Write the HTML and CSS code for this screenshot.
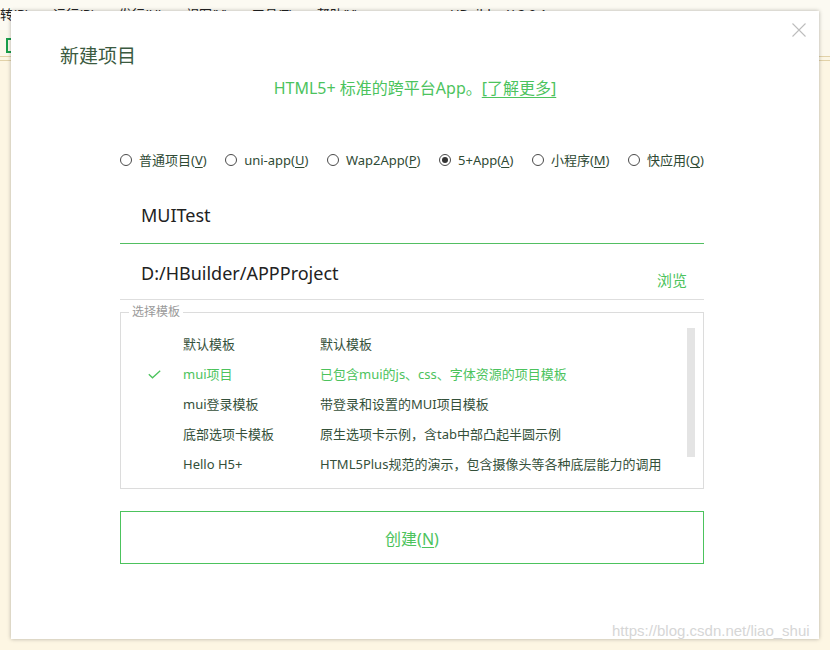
FILE: index.html
```html
<!DOCTYPE html>
<html lang="zh-CN">
<head>
<meta charset="utf-8">
<title>新建项目</title>
<link rel="stylesheet" href="styles.css">
</head>
<body>
<div class="app">
  <div class="menubar">
    <span class="mi first">转(R)</span>
    <span class="mi">运行(R)</span>
    <span class="mi">发行(U)</span>
    <span class="mi">视图(V)</span>
    <span class="mi">工具(T)</span>
    <span class="mi">帮助(Y)</span>
    <span class="mi far">HBuilder X 2.0.1</span>
  </div>
  <div class="toolbar"><span class="tb-bracket"></span></div>
  <div class="sep"></div>
  <div class="workspace"></div>
</div>

<div class="dialog">
  <button class="close" aria-label="关闭">
    <svg width="14" height="14" viewBox="0 0 14 14"><path d="M0.5 0.5 L13.5 13.5 M13.5 0.5 L0.5 13.5" stroke="#bdbdbd" stroke-width="1.1" fill="none"/></svg>
  </button>
  <h1 class="title">新建项目</h1>
  <p class="subtitle">HTML5+ 标准的跨平台App。<a class="more">[了解更多]</a></p>

  <div class="radios">
    <label class="radio"><span class="dot"></span><span>普通项目(<u>V</u>)</span></label>
    <label class="radio"><span class="dot"></span><span>uni-app(<u>U</u>)</span></label>
    <label class="radio"><span class="dot"></span><span>Wap2App(<u>P</u>)</span></label>
    <label class="radio"><span class="dot on"></span><span>5+App(<u>A</u>)</span></label>
    <label class="radio"><span class="dot"></span><span>小程序(<u>M</u>)</span></label>
    <label class="radio"><span class="dot"></span><span>快应用(<u>Q</u>)</span></label>
  </div>

  <div class="field name">MUITest</div>
  <div class="field path"><span>D:/HBuilder/APPProject</span><span class="browse">浏览</span></div>

  <fieldset class="templates">
    <legend>选择模板</legend>
    <div class="tpl-body">
      <div class="tpl-list">
        <div class="tpl-row"><span class="chk"></span><span>默认模板</span><span>默认模板</span></div>
        <div class="tpl-row sel"><span class="chk"><svg width="13" height="9" viewBox="0 0 13 9"><polyline points="0.8,4.2 4.5,7.8 12.2,0.8" fill="none" stroke="#4cc35d" stroke-width="1.3"/></svg></span><span>mui项目</span><span>已包含mui的js、css、字体资源的项目模板</span></div>
        <div class="tpl-row"><span class="chk"></span><span>mui登录模板</span><span>带登录和设置的MUI项目模板</span></div>
        <div class="tpl-row"><span class="chk"></span><span>底部选项卡模板</span><span>原生选项卡示例，含tab中部凸起半圆示例</span></div>
        <div class="tpl-row"><span class="chk"></span><span>Hello H5+</span><span>HTML5Plus规范的演示，包含摄像头等各种底层能力的调用</span></div>
      </div>
      <div class="scrollbar"></div>
    </div>
  </fieldset>

  <button class="create">创建(<u>N</u>)</button>
</div>

<div class="watermark">https://blog.csdn.net/liao_shui</div>
</body>
</html>
```

FILE: styles.css
```css
html, body {
  margin: 0;
  padding: 0;
}

body {
  width: 830px;
  height: 650px;
  overflow: hidden;
  position: relative;
  background: #fdf6e4;
  font-family: "Noto Sans", "Noto Sans CJK SC", sans-serif;
}

.app {
  display: flex;
  flex-direction: column;
  height: 650px;
}

.menubar {
  height: 30px;
  background: #fcfaf2;
  display: flex;
  font-size: 13px;
  line-height: 20px;
  padding-top: 4px;
  box-sizing: border-box;
  color: #222;
  white-space: nowrap;
}

.mi {
  margin-left: 24px;
}

.mi.first {
  margin-left: 0;
}

.mi.far {
  margin-left: 92px;
}

.toolbar {
  height: 26px;
  background: #fcf8ec;
  display: flex;
  align-items: flex-start;
}

.tb-bracket {
  width: 3px;
  height: 11px;
  margin: 8px 0 0 6px;
  border: 2px solid #1a9e4a;
  border-right: none;
}

.sep {
  height: 3px;
  border-top: 1px solid #e2d2a8;
  border-bottom: 1px solid #e2d2a8;
  background: #fcf6e4;
}

.workspace {
  flex: 1;
  background: #fdf6e3;
}

/* dialog */
.dialog {
  position: absolute;
  left: 11px;
  top: 11px;
  width: 808px;
  height: 628px;
  box-sizing: border-box;
  padding: 31px 115px 0 109px;
  background: #fff;
  box-shadow: 0 0 4px rgba(0, 0, 0, 0.3);
  color: #34503a;
}

.close {
  position: absolute;
  left: 781px;
  top: 12px;
  width: 14px;
  height: 14px;
  padding: 0;
  border: none;
  background: transparent;
  display: block;
}

.close svg {
  display: block;
}

.title {
  margin: 0 0 0 -60px;
  font-size: 19px;
  font-weight: normal;
  line-height: 28px;
  color: #3b5a40;
}

.subtitle {
  margin: 7px -6px 0 0;
  font-size: 16px;
  line-height: 22px;
  text-align: center;
  color: #4cc35d;
}

.more {
  color: inherit;
  text-decoration: underline;
  text-underline-offset: 3px;
}

.radios {
  display: flex;
  justify-content: space-between;
  margin-top: 51px;
  font-size: 13px;
  line-height: 20px;
  color: #2f4a35;
  white-space: nowrap;
}

.radio {
  display: flex;
  align-items: center;
  gap: 7px;
}

.radio u {
  text-underline-offset: 2px;
}

.dot {
  width: 12px;
  height: 12px;
  box-sizing: border-box;
  border: 1px solid #4a4a4a;
  border-radius: 50%;
  display: flex;
  align-items: center;
  justify-content: center;
}

.dot.on::after {
  content: "";
  width: 6px;
  height: 6px;
  border-radius: 50%;
  background: #333;
}

.field {
  font-size: 18px;
  line-height: 24px;
  color: #222;
}

.field.name {
  margin-top: 29px;
  padding: 4px 0 16px 21px;
  border-bottom: 1px solid #52bf62;
}

.field.path {
  display: flex;
  justify-content: space-between;
  align-items: flex-start;
  padding: 17px 17px 14px 21px;
  border-bottom: 1px solid #dedede;
}

.browse {
  font-size: 15px;
  line-height: 20px;
  margin: 9px 0 -5px;
  color: #4cc35d;
}

.templates {
  margin: 3px 0 0;
  padding: 8px 8px 9px 8px;
  border: 1px solid #dcdcdc;
  min-width: 0;
}

.templates legend {
  padding: 0 3px;
  font-size: 12px;
  line-height: 18px;
  color: #9a9a9a;
}

.tpl-body {
  display: flex;
}

.tpl-list {
  flex: 1;
  min-width: 0;
}

.tpl-row {
  display: grid;
  grid-template-columns: 54px 137px 1fr;
  height: 30px;
  align-items: center;
  font-size: 13px;
  line-height: 30px;
  white-space: nowrap;
  color: #34503a;
}

.tpl-row.sel {
  color: #4cc35d;
}

.chk {
  display: flex;
  align-items: center;
  padding-left: 19px;
}

.chk svg {
  display: block;
}

.scrollbar {
  width: 8px;
  height: 129px;
  margin-top: -1px;
  background: #e4e4e4;
}

.create {
  display: block;
  width: 100%;
  height: 53px;
  margin-top: 22px;
  border: 1px solid #4cc35d;
  background: #fff;
  color: #4cc35d;
  font-family: "Noto Sans", "Noto Sans CJK SC", sans-serif;
  font-size: 16px;
  padding: 0;
}

.create u {
  text-underline-offset: 2px;
}

.watermark {
  position: absolute;
  left: 612px;
  top: 621px;
  font-family: "Liberation Sans", sans-serif;
  font-size: 15px;
  line-height: 20px;
  color: #d6d6d6;
  text-shadow: 0 0 1px #fff;
  white-space: nowrap;
}
```
